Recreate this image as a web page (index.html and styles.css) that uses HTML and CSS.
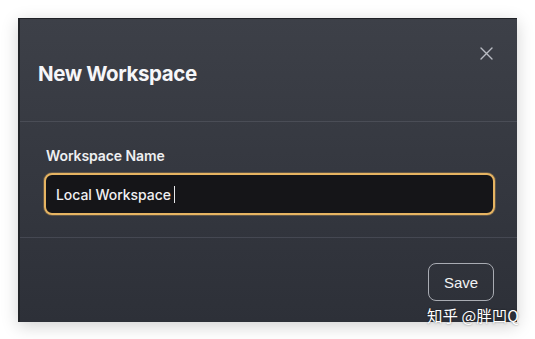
FILE: index.html
```html
<!DOCTYPE html>
<html>
<head>
<meta charset="utf-8">
<link rel="stylesheet" href="styles.css">
</head>
<body>
<div class="page">
  <div class="dialog">
    <div class="dialog-header">
      <h1 class="title">New Workspace</h1>
      <button class="close" aria-label="Close">
        <svg width="13" height="13" viewBox="0 0 13 13"><path d="M1 1L12 12M12 1L1 12" stroke="#b9bcc3" stroke-width="1.4" stroke-linecap="round"/></svg>
      </button>
    </div>
    <div class="dialog-body">
      <label class="label">Workspace Name</label>
      <div class="input">
        <span class="input-text">Local Workspace</span><span class="caret"></span>
      </div>
    </div>
    <div class="dialog-footer">
      <button class="save">Save</button>
    </div>
  </div>
  <div class="watermark">知乎 @胖凹Q</div>
</div>
</body>
</html>
```
FILE: styles.css
```css
html, body {
  margin: 0;
  padding: 0;
  background: #ffffff;
}
.page {
  position: relative;
  width: 535px;
  height: 339px;
  padding: 18px 0 0 18px;
  box-sizing: border-box;
}
.dialog {
  width: 499px;
  height: 304px;
  box-sizing: border-box;
  display: flex;
  flex-direction: column;
  background: linear-gradient(#3d4048, #2d3038);
  border-top: 1px solid #202227;
  border-left: 2px solid #222428;
  box-shadow: 0 4px 16px rgba(0,0,0,0.18);
  font-family: Inter, "Noto Sans", sans-serif;
  color: #f2f2f4;
}
.dialog-header {
  height: 102px;
  display: flex;
  align-items: flex-start;
  justify-content: space-between;
  border-bottom: 1px solid #4a4d56;
  padding: 0 24px 0 18px;
}
.title {
  margin: 42px 0 0 0;
  font-size: 20.5px;
  font-weight: 700;
  letter-spacing: -0.4px;
  color: #f6f6f8;
}
.close {
  margin-top: 28px;
  background: none;
  border: 0;
  padding: 0;
  width: 13px;
  height: 13px;
  display: flex;
}
.dialog-body {
  height: 116px;
  box-sizing: border-box;
  padding: 25px 22px 0 24px;
  border-bottom: 1px solid #454852;
  display: flex;
  flex-direction: column;
}
.label {
  font-size: 14px;
  font-weight: 600;
  letter-spacing: -0.1px;
  color: #eeeff1;
  line-height: 18px;
  padding-left: 2px;
}
.input {
  margin-top: 8px;
  height: 42px;
  box-sizing: border-box;
  border: 2px solid #e6b462;
  border-radius: 8px;
  background: #151518;
  display: flex;
  align-items: center;
  padding-left: 10px;
  box-shadow: 0 0 0 1px rgba(230,180,98,0.25);
}
.input-text {
  font-size: 14px;
  font-weight: 500;
  letter-spacing: -0.05px;
  color: #f0f0f2;
}
.caret {
  width: 1px;
  height: 17px;
  background: #e8e8ea;
  margin-left: 3px;
}
.dialog-footer {
  flex: 1;
  display: flex;
  justify-content: flex-end;
  align-items: flex-start;
  padding: 25px 23px 0 0;
}
.save {
  width: 66px;
  height: 38px;
  border: 1px solid #a9acb3;
  border-radius: 8px;
  background: transparent;
  color: #f2f2f4;
  font-family: "Liberation Sans", Arial, sans-serif;
  font-size: 15px;
}
.watermark {
  position: absolute;
  left: 427px;
  top: 304px;
  font-family: "Noto Sans CJK SC", sans-serif;
  font-size: 15.5px;
  color: #ffffff;
  text-shadow: 0 0 2px rgba(0,0,0,0.5);
  white-space: nowrap;
}
```
